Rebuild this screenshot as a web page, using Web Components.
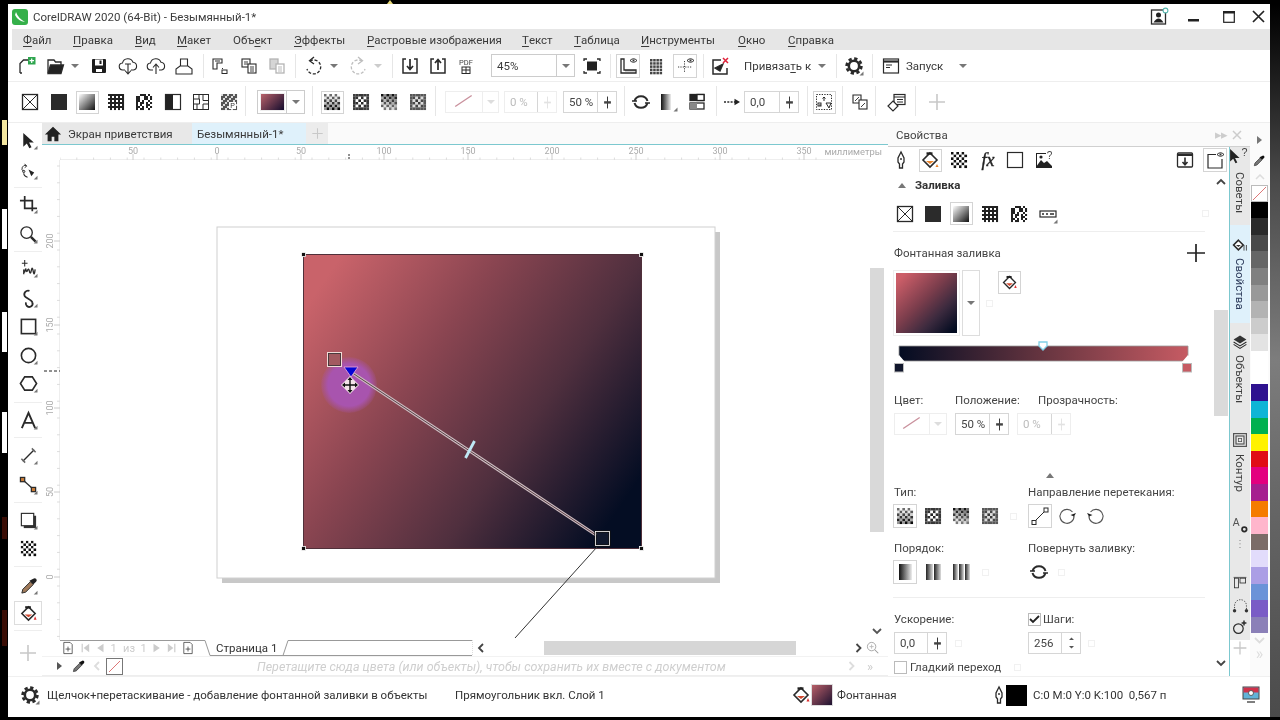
<!DOCTYPE html>
<html lang="ru"><head><meta charset="utf-8"><title>CorelDRAW</title>
<style>html,body{margin:0;padding:0;background:#000;overflow:hidden}</style></head>
<body><cd-desktop></cd-desktop>
<script>
const FONT='Roboto,"Noto Sans","Liberation Sans",sans-serif';
const tri='<path d="M19.5 15.5v4h-4z" fill="#777" stroke="none"/>';
function cells(n,f){let s='<rect x="2" y="2" width="16" height="16" fill="#fff" stroke="none"/>';const c=16/n;for(let y=0;y<n;y++)for(let x=0;x<n;x++){s+=`<rect x="${2+x*c}" y="${2+y*c}" width="${c+.05}" height="${c+.05}" fill="${f(x,y)}" stroke="none"/>`}return s}
const grey=v=>{const h=Math.round(v);return `rgb(${h},${h},${h})`};
const lg=(id,a,b,x2=1,y2=1)=>`<defs><linearGradient id="${id}" x1="0" y1="0" x2="${x2}" y2="${y2}"><stop offset="0" stop-color="${a}"/><stop offset="1" stop-color="${b}"/></linearGradient></defs>`;
const eye='<path d="M12 4.5q3.5-3.5 7 0q-3.5 3.5-7 0z" stroke-width="1"/><circle cx="15.5" cy="4.5" r="1" fill="#333" stroke="none"/>';
const ICONS={
 newdoc:'<path d="M3 17V7.5L6.5 4H11M3 17h2"/><rect x="11" y="1" width="7.5" height="7.5" fill="#2fa64f" stroke="none"/><path d="M14.7 2.5v4.5M12.5 4.7h4.5" stroke="#fff" stroke-width="1.2"/>',
 open:'<path d="M3 17V4h6l1.5 2H16v3"/><path d="M3 17.5L5.5 9H18.5L16 17.5z" fill="#222"/>',
 save:'<rect x="3" y="3" width="14" height="14" rx="1" fill="#1d1d1d" stroke="none"/><rect x="6" y="3.5" width="8" height="6" fill="#fff" stroke="none"/><rect x="10.5" y="4.5" width="2" height="3.5" fill="#1d1d1d" stroke="none"/><rect x="7" y="13" width="6" height="3" fill="#fff" stroke="none"/>',
 clouddown:'<path d="M7 14H5a3.5 3.5 0 0 1-.5-7a5.5 5.5 0 0 1 10.5-.7a3.9 3.9 0 0 1 .5 7.7H13" stroke-width="1.1"/><path d="M10 8v10M7 14.5l3 3.500 3-3.500M7 8h6" stroke-width="1.100"/>',
 cloudup:'<path d="M7 14H5a3.5 3.5 0 0 1-.5-7a5.5 5.5 0 0 1 10.5-.7a3.9 3.9 0 0 1 .5 7.7H13" stroke-width="1.100"/><path d="M10 18V8M7 11.500L10 8l3 3.500" stroke-width="1.100"/>',
 print:'<path d="M6.500 10V3h7v7" stroke-width="1.100"/><path d="M2 18v-5l4-3h8l4 3v5z" stroke-width="1.100"/>',
 layout:'<path d="M3 3h9v4H7v6H3z" stroke-width="1.100"/><path d="M5 5h5" stroke-width="1"/><rect x="12" y="14" width="5" height="3.5" stroke-width="1"/><path d="M12.5 12v1" stroke-width="1"/>',
 copy:'<rect x="3" y="3" width="8" height="8" stroke-width="1.100"/><path d="M5 6h4M5 8h4" stroke-width=".9"/><rect x="9" y="8" width="8" height="9" fill="#fff" stroke-width="1.100"/><path d="M11 11h4M11 13h4M11 15h4" stroke-width=".9"/>',
 paste:'<g opacity=".35"><rect x="3" y="3" width="8" height="10" fill="#888"/><rect x="9" y="8" width="8" height="9" fill="#fff"/><path d="M11 11h4M11 13h4M11 15h4" stroke-width=".9"/></g>',
 undo:'<path d="M6 5a7 7 0 1 1-3 8" stroke-dasharray="3 1.7"/><path d="M10 1L5.500 4.800 10 8" />',
 redo:'<g opacity=".3"><path d="M14 5a7 7 0 1 0 3 8" stroke-dasharray="3 1.7"/><path d="M10 1l4.500 3.800L10 8"/></g>',
 imp:'<path d="M6 3H3v14h14V3h-3" stroke-width="1.500"/><path d="M10 3v10M7 10l3 3.500 3-3.500" stroke-width="1.700"/>',
 exp:'<path d="M6 3H3v14h14V3h-3" stroke-width="1.500"/><path d="M10 14V4M7 7l3-3.500L13 7" stroke-width="1.700"/>',
 pdf:`<text x="10" y="9" font-size="7.500" text-anchor="middle" fill="#444" stroke="none" font-family='${FONT}'>PDF</text><rect x="6" y="11" width="8" height="6.500" stroke-width="1"/><path d="M10 11v6M6 14h8" stroke-width="1"/>`,
 fit:'<rect x="5" y="5.500" width="10" height="9" fill="#222" stroke="none"/><path d="M2 5V3h3M15 3h3v2M2 15v2h3M15 17h3v-2" stroke-width="1.300"/>',
 rulereye:'<path d="M3 3h3v11h12v3H3z" stroke-width="1.300"/><path d="M8 14v1.500M10 14v1.500M12 14v1.500M14 14v1.500M16 14v1.500" stroke-width=".8"/>'+eye,
 grideye:(()=>{let s='';for(let y=0;y<5;y++)for(let x=0;x<4;x++)s+=`<rect x="${3+x*3.2}" y="${3+y*3.2}" width="2.500" height="2.500" fill="#444" stroke="none"/>`;return s})(),
 guideeye:'<path d="M9.500 5v11M3 11h14" stroke-width=".9" stroke-dasharray="1.200 1.200"/>'+eye,
 snapoff:'<path d="M11 4H3v14h14v-6" stroke-width="1.500"/><path d="M13 8l-8 4 5 3z" fill="#222"/><path d="M13 2l5 5M18 2l-5 5" stroke="#e0223a" stroke-width="1.500"/>',
 gear:'<circle cx="10" cy="10" r="5.200" stroke-width="2.600"/><circle cx="10" cy="10" r="7.400" stroke-width="2.600" stroke-dasharray="3.300 2.500" />'+tri,
 win:'<rect x="2.500" y="3" width="15" height="14" stroke-width="1.200"/><path d="M2.500 5.500h15" stroke-width="2.200"/><path d="M5 9h6M5 11.500h4" stroke-width="1"/>',
 none:'<rect x="2.500" y="2.500" width="15" height="15"/><path d="M2.500 2.500l15 15M17.500 2.500l-15 15" stroke-width="1"/>',
 solid:'<rect x="2" y="2" width="16" height="16" fill="#2b2b2b" stroke="none"/>',
 grad:lg('g1','#fff','#111')+'<rect x="2" y="2" width="16" height="16" fill="url(#g1)" stroke="none"/>',
 vector:cells(8,(x,y)=>((y%2==0)?'#222':(x%2?'#222':'#fff'))),
 texture:cells(8,(x,y)=>[0,1,5,7,10,11,14,18,19,22,26,28,29,31,33,36,38,41,43,44,47,50,52,54,57,60,61,63].includes(y*8+x)?'#fff':'#222'),
 twocolor:'<rect x="2.500" y="2.500" width="15" height="15" stroke-width="1.200"/><rect x="2.500" y="2.500" width="7.500" height="15" fill="#222" stroke="none"/>',
 maze:'<rect x="2.500" y="2.500" width="15" height="15" stroke-width="1"/><path d="M2.500 7h6v5h-6M8 2.500V7M12 2.500v6h5.500M12 12h5.500M6 12v5.500M12 12v5.500" stroke-width="1"/>',
 hatch:cells(8,(x,y)=>(x+y)%3?'#555':'#ddd')+'<rect x="10" y="10" width="7" height="7" fill="#fff" stroke="none"/><text x="13.500" y="16.300" font-size="7" text-anchor="middle" fill="#333" stroke="none" font-family="Liberation Sans">P</text>',
 more:'<rect x="2" y="7" width="16" height="6" stroke-width="1.200"/><path d="M4 10h2M8 10h2M12 10h4" stroke-width="1.600"/>'+tri,
 chkA:cells(6,(x,y)=>(x+y)%2?grey(250-y*20):grey(110-y*20)),
 chkB:cells(6,(x,y)=>{const d=Math.hypot(x-2.5,y-2.5);return (x+y)%2&&d<2.5?'#fff':grey(30+d*10)}),
 chkC:cells(6,(x,y)=>(x+y)%2?grey(255-x*10-(5-y)*20):grey(20+y*20)),
 chkD:cells(6,(x,y)=>{const d=Math.max(Math.abs(x-2.5),Math.abs(y-2.5));return (x+y)%2&&d<2.5?'#ddd':grey(50+d*15)}),
 checker:cells(6,(x,y)=>(x+y)%2?'#fff':'#111'),
 pen:'<path d="M10 2L7 8v4l1.500 2v4h3v-4L13 12V8z"/><circle cx="10" cy="9" r="1" fill="#333" stroke="none"/>',
 fill:'<path d="M10 3l7 7-7 7-7-7z" fill="#fff" stroke-width="1.600"/><path d="M6.500 3.500h6" stroke="#222" stroke-width="2.400"/><path d="M6 11h8l-4 3z" fill="#d0482f" stroke="none"/><path d="M17 13l1.500 3.500h-3z" fill="#d33" stroke="none"/>',
 fillo:'<path d="M10 3l7 7-7 7-7-7z" fill="#fff" stroke-width="1.600"/><path d="M6.500 3.500h6" stroke="#222" stroke-width="2.400"/><path d="M6 11h8l-4 3z" fill="#e8842c" stroke="none"/><path d="M17 14l1.500 3h-3z" fill="#e8842c" stroke="none"/>',
 fx:'<text x="10" y="16" font-size="18" font-style="italic" text-anchor="middle" fill="#222" stroke="#222" stroke-width=".4" font-family="Liberation Serif">fx</text>',
 square:'<rect x="2.500" y="2.500" width="15" height="15" stroke-width="1.200"/>',
 imgq:'<path d="M2 3h10v1H3v12h15v2H2z" fill="#222" stroke="none"/><path d="M2 17l5-7 3 3 3-2 5 5v2H2z" fill="#222" stroke="none"/><circle cx="7" cy="7" r="1.600" fill="#222" stroke="none"/><text x="15.500" y="9" font-size="10" text-anchor="middle" fill="#444" stroke="none" font-family="Liberation Sans">?</text>',
 loadp:'<rect x="2.500" y="3" width="15" height="14" rx="1" stroke-width="1.300"/><path d="M2.500 5h15" stroke-width="2"/><path d="M10 7.500v7M7.500 12l2.500 2.700 2.500-2.700" stroke-width="1.600"/>',
 wineye:'<path d="M11 4.500H3V18h14v-9" stroke-width="1.200"/>'+eye,
 plus:'<path d="M10 2v16M2 10h16" stroke-width="1.600" stroke="#c8c8c8"/>',
 plusk:'<path d="M10 1v18M1 10h18" stroke-width="1.700" stroke="#222"/>',
 slash:'<path d="M2 15L17 5" stroke="#c9909c" stroke-width="1.200"/>',
 spin:'<path d="M10 3v14" stroke-width="1.100"/><rect x="6" y="8.500" width="8" height="2.800" fill="#444" stroke="none"/>',
 spinoff:'<path d="M10 3v14" stroke="#e2e2e2" stroke-width="1.100"/><path d="M6 10h8" stroke="#e2e2e2" stroke-width="2"/>',
 rot:'<path d="M3.500 9a6.800 6.800 0 0 1 13 0" stroke-width="2"/><path d="M16.500 11a6.800 6.800 0 0 1-13 0" stroke-width="2"/><path d="M1 9h5M14 11h5" stroke-width="1.600"/>',
 gramp:lg('g2','#111','#eee',1,0)+'<rect x="3" y="2" width="10" height="16" fill="url(#g2)" stroke="none"/>'+tri,
 edgeb:'<rect x="3" y="2.500" width="14" height="6" fill="#222" stroke="#222"/><rect x="3" y="11" width="14" height="6" fill="#fff"/><rect x="3" y="11" width="7" height="6" fill="#888" stroke="none"/><rect x="10" y="2.500" width="7" height="6" fill="#fff" stroke="#222"/>',
 arrowr:'<path d="M1 10h11" stroke-dasharray="2 1.300" stroke-width="1.500"/><path d="M11.500 6.800L17 10l-5.500 3.200z" fill="#222" stroke="none"/>',
 bbox:'<rect x="2.500" y="2.500" width="15" height="15" stroke-width="1" stroke-dasharray="1.300 1.300"/><path d="M10 5v4M8.500 6.500L10 5l1.500 1.500M5 13h2M12 11h5l-2 5z" stroke-width="1"/><rect x="4" y="11" width="3" height="3" stroke-width="1"/>',
 pgcopy:'<path d="M3 3h8v8H3z" stroke-width="1.100"/><path d="M5 9l4-4" stroke-width=".9"/><rect x="9" y="8" width="8" height="9" fill="#fff" stroke-width="1.100"/><path d="M11 15l4-4" stroke-width=".9"/>',
 stylecard:'<rect x="7" y="2.500" width="11" height="10" stroke-width="1.200"/><path d="M7 5h11M10 7.500h6M10 10h6" stroke-width="1"/><path d="M6 9l5 5-5 5-5-5z" fill="#fff" stroke-width="1.200"/>',
 user:'<rect x="2.500" y="3" width="14" height="14" stroke-width="1.300"/><circle cx="9.500" cy="8" r="2.500" fill="#222" stroke="none"/><path d="M4.500 15.500q5-8 10 0z" fill="#222" stroke="none"/><circle cx="16.500" cy="3.500" r="2.400" stroke="#57b6ae" stroke-width="1.100" fill="#fff"/>',
 pick:'<path d="M4.500 2l0 14.500 3.700-3.300 2.700 5 2.300-1.200-2.600-4.900h5z" fill="#222" stroke="none"/>'+tri,
 shape:'<path d="M5 11a3 3 0 0 1 3-6M6 3l2 2.500L6 7" stroke-width="1"/><circle cx="5" cy="11" r="1.200" stroke-width="1"/><path d="M5 13q0 3 4 4" stroke-width="1.100"/><path d="M10 9l6 3-3 4z" fill="#222" stroke="none"/>'+tri,
 crop:'<path d="M1 6h13v11M6 1v13h13" stroke-width="1.800"/>'+tri,
 zoom:'<circle cx="8" cy="8" r="6" stroke-width="1.400"/><path d="M12.500 12.500l5 5" stroke-width="2.600"/>'+tri,
 free:'<path d="M6 1v7M3 4.500h6" stroke-width="1.100"/><path d="M5 16V11q1 6 2-1 1 5 2 2t2 1 2-1 2 1 2-2" stroke-width="1.400"/>'+tri,
 art:'<path d="M11 2a4 4 0 0 0-5 5.500c1 2 7 3.500 8 6.500a3.500 3.500 0 0 1-6 3.500c-1-1-1-2.500-.5-3.500" stroke-width="1.900"/>'+tri,
 rect:'<rect x="2.500" y="2.500" width="15" height="15" stroke-width="1.700"/>'+tri,
 ell:'<circle cx="10" cy="10" r="7.500" stroke-width="1.700"/>'+tri,
 poly:'<path d="M6 3h8l4.500 7-4.500 7H6l-4.500-7z" stroke-width="1.700"/>'+tri,
 textA:'<path d="M3 18L10 2l7 16M5.500 12.500h9" stroke-width="2"/>'+tri,
 dim:'<path d="M4 16L16 4" stroke-width="1.400"/><path d="M13.500 2.500l4 4M2.500 13.500l4 4" stroke-width="1.600" stroke="#666"/>'+tri,
 conn:'<path d="M4 4l11 10" stroke-width="1.300"/><rect x="1.500" y="1.500" width="4.500" height="4.500" fill="#c87b38"/><rect x="13" y="12" width="4.500" height="4.500" fill="#c87b38"/>'+tri,
 shadow:'<rect x="5" y="5" width="13" height="13" fill="#333" stroke="none"/><rect x="2.500" y="2.500" width="13" height="13" fill="#fff" stroke-width="1.200"/>'+tri,
 drop:'<path d="M3 18l1-4 8-8 3 3-8 8z" fill="#a07a5a" stroke-width="1"/><path d="M11 5l4 4 3-3a2 2 0 0 0-3-3z" fill="#222" stroke="none"/>'+tri,
 dropS:'<path d="M2 18l1-4 8-8 3 3-8 8z" fill="#777" stroke-width="1"/><path d="M10 5l4 4 3-3a2 2 0 0 0-3-3z" fill="#111" stroke="none"/>',
 bstart:'<path d="M6 4v12" stroke="#ccc" stroke-width="1.700"/><path d="M16 4v12L8 10z" fill="#ccc" stroke="none"/>',
 bprev:'<path d="M15 4v12L6 10z" fill="#ccc" stroke="none"/>',
 bnext:'<path d="M5 4v12l9-6z" fill="#ccc" stroke="none"/>',
 bend:'<path d="M14 4v12" stroke="#ccc" stroke-width="1.700"/><path d="M4 4v12l8-6z" fill="#ccc" stroke="none"/>',
 addpg:'<path d="M4 2h9l3 3v13H4z" stroke-width="1"/><path d="M10 8v7M6.500 11.500h7" stroke-width="1"/>',
 zoomnav:'<circle cx="8" cy="8" r="6" stroke-width="1" stroke="#888"/><path d="M5 8h6M8 5v6" stroke="#bbb"/><path d="M12.500 12.500l5 5" stroke-width="1.500" stroke="#999"/>',
 lineDir:'<path d="M4 16L16 4" stroke-width="1"/><rect x="2" y="14.500" width="4" height="4" fill="#fff" stroke-width="1"/><rect x="14" y="2" width="4" height="4" fill="#fff" stroke-width="1"/>',
 cw:'<path d="M15.500 6a7 7 0 1 0 1.500 4" stroke-width="1.100" stroke="#555"/><path d="M13.500 9l3.500 1.500L19 7z" fill="#222" stroke="none"/>',
 ccw:'<path d="M4.500 6a7 7 0 1 1-1.500 4" stroke-width="1.100" stroke="#555"/><path d="M6.500 9L3 10.500 1 7z" fill="#222" stroke="none"/>',
 ord1:lg('g3','#111','#eee',1,0)+'<rect x="4" y="2" width="13" height="16" fill="url(#g3)" stroke="none"/>',
 ord2:lg('g4','#222','#ddd',1,0)+'<rect x="3" y="2" width="7" height="16" fill="url(#g4)" stroke="none"/><rect x="11" y="2" width="7" height="16" fill="url(#g4)" stroke="none"/>',
 ord3:lg('g5','#222','#ddd',1,0)+'<rect x="2" y="2" width="5" height="16" fill="url(#g5)" stroke="none"/><rect x="8" y="2" width="5" height="16" fill="url(#g5)" stroke="none"/><rect x="14" y="2" width="5" height="16" fill="url(#g5)" stroke="none"/>',
 home:'<path d="M10 2L1 10.500h3V18h4.500v-5h3v5H16v-7.500h3z" fill="#222" stroke="none"/>',
 layers:'<path d="M10 2l8 5-8 5-8-5z" fill="#333" stroke="none"/><path d="M2 10l8 5 8-5M2 13l8 5 8-5" stroke-width="1.300"/>',
 dockFill:'<path d="M8 4l6 6-6 6-6-6z" fill="#fff" stroke-width="2"/><path d="M5 10h6l-3 2.500z" fill="#333" stroke="none"/><path d="M15 10v7M18 10v7" stroke-width="1"/>',
 outline:'<rect x="2" y="2" width="16" height="16" stroke-width="1.500" stroke="#555"/><rect x="5" y="5" width="10" height="10" stroke-width="1.500" stroke="#555"/><rect x="8" y="8" width="4" height="4" stroke-width="1" stroke="#555"/>',
 agear:`<text x="1" y="11" font-size="12" fill="#555" stroke="none" font-family="Liberation Sans">A</text><circle cx="14.500" cy="14.500" r="2.700" stroke-width="2"/>`,
 cursorq:'<path d="M-1 1v14l3.500-3 2.500 5 2-1-2.500-5h5z" fill="#222" stroke="none"/><text x="15" y="9" font-size="12" text-anchor="middle" fill="#444" stroke="none" font-family="Liberation Sans">?</text>',
 dots:'<path d="M10 3v1M10 8v1M10 13v1" stroke-width="1.500" stroke="#666"/>',
 aligni:'<path d="M2 3h16" stroke-width="1" stroke="#444"/><rect x="3" y="4" width="5" height="12" stroke-width="1"/><rect x="10" y="4" width="7" height="6" stroke-width="1"/>',
 curvei:'<path d="M3 15V9a7 7 0 0 1 14 0v6" stroke-width="1" stroke-dasharray="1.500 1.500"/><circle cx="3" cy="15" r="2" fill="#333" stroke="none"/><circle cx="17" cy="15" r="2" fill="#333" stroke="none"/>',
 ovalp:'<circle cx="8" cy="12" r="6" stroke-width="1.500"/><path d="M15 2v6M12 5h6" stroke-width="1.800"/>',
 monitor:'<rect x="2" y="2" width="16" height="12" fill="#61b3d8" stroke="#444" stroke-width="1"/><rect x="2.500" y="2.500" width="15" height="5" fill="#d0324a" stroke="none"/><circle cx="10" cy="8" r="2.500" fill="#fff" stroke="#444" stroke-width=".8"/><path d="M6 17h8" stroke-width="1.500" stroke="#555"/>'
};
class CdIcon extends HTMLElement{constructor(){super();this.attachShadow({mode:'open'})}
 connectedCallback(){const n=this.getAttribute('name'),s=+(this.getAttribute('size')||20);
 this.shadowRoot.innerHTML=`<style>:host{display:inline-flex;width:${s}px;height:${s}px;flex:none}svg{display:block;overflow:visible}</style><svg width="${s}" height="${s}" viewBox="0 0 20 20" fill="none" stroke="#2a2a2a" stroke-width="1.300">${ICONS[n]||''}</svg>`}}
customElements.define('cd-icon',CdIcon);
const ic=(n,s=20)=>`<cd-icon name="${n}" size="${s}"></cd-icon>`;
const BASE=`:host{box-sizing:border-box}*{box-sizing:border-box}.it{display:flex;align-items:center;justify-content:center;flex:none;white-space:nowrap}
.row{display:flex;align-items:center}.box{border:1px solid #d4d4d4;background:#fff;align-self:center}
.sep{width:1px;background:#e6e6e6;align-self:stretch;margin-block:4px}.dn{width:0;height:0;border-left:4px solid transparent;border-right:4px solid transparent;border-top:4px solid #777}
.fa{width:7px;height:7px;border:1px solid #f1f1f1}.gr{color:#bbb}`;
// flow row: each item is [left, width, html, class]; the gap to the previous item is a margin
function row(items,origin){let p=origin,o='';for(const [l,w,h,c,st] of items){o+=`<span class="it ${c||''}" style="margin-left:${l-p}px;width:${w}px;${st||''}">${h}</span>`;p=l+w}return o}
const I=(cx,n,bw)=>bw?[cx-bw/2,bw,ic(n),'box',`height:${bw}px`]:[cx-10,20,ic(n)];
const S=x=>[x,1,'','sep'];
const A=cx=>[cx-4,8,'<span class="dn"></span>'];
const T=(x,w,t,st)=>[x,w,t,'',`justify-content:flex-start;${st||''}`];
class Comp extends HTMLElement{constructor(){super();this.attachShadow({mode:'open'}).innerHTML=`<style>${BASE}${this.css()}</style>${this.html()}`}css(){return''}html(){return''}}
const def=(n,c,h)=>customElements.define(n,class extends Comp{css(){return c}html(){return typeof h==='function'?h():h}});

def('cd-spin',`:host{display:flex;border:1px solid #d6d6d6;background:#fff;height:22px;align-items:stretch}.v{flex:1;padding-left:5px;line-height:20px;font-size:11.500px;color:#444}.b{width:19px;border-left:1px solid #d6d6d6;display:flex;align-items:center;justify-content:center}`,'<span class="v"><slot></slot></span><span class="b"><slot name="b"></slot></span>');

def('title-bar',`:host{display:flex;height:25px;background:#fff;align-items:center;font-size:11.500px;color:#3c3c3c}`,
 ()=>row([[4,16,`<svg width="16" height="16" viewBox="0 0 16 16"><rect width="16" height="16" rx="3" fill="#35b04a"/><path d="M4 3q2 6 9 10q-7-1-10-7z" fill="#fff"/></svg>`],
 T(25,230,'CorelDRAW 2020 (64-Bit) - Безымянный-1*'),
 [1141,20,ic('user')],
 [1180,12,'<svg width="12" height="12"><rect x="0" y="8" width="11" height="2.500" fill="#222"/></svg>'],
 [1215,12,'<svg width="12" height="12"><rect x=".7" y=".7" width="10.600" height="10.600" fill="none" stroke="#222" stroke-width="1.200"/><rect x="0" y="0" width="12" height="2.500" fill="#222"/></svg>'],
 [1244,13,'<svg width="13" height="13"><path d="M1 1l11 11M12 1L1 12" stroke="#222" stroke-width="1.700"/></svg>']],0));

const M=[[23,'<u>Ф</u>айл'],[73,'<u>П</u>равка'],[135,'<u>В</u>ид'],[177,'<u>М</u>акет'],[233,'Объ<u>е</u>кт'],[294,'<u>Э</u>ффекты'],[367,'<u>Р</u>астровые изображения'],[522,'<u>Т</u>екст'],[574,'<u>Т</u>аблица'],[641,'<u>И</u>нструменты'],[738,'<u>О</u>кно'],[788,'<u>С</u>правка']];
def('menu-bar',`:host{display:flex;height:21px;margin-left:4px;background:#e6e6e6;align-items:center;font-size:11.500px;color:#3a3a3a}u{text-underline-offset:2px}`,
 ()=>row(M.map((m,i)=>T(m[0]-12,(M[i+1]?M[i+1][0]:m[0]+60)-m[0],m[1])),0));

def('tool-one',`:host{display:flex;height:32px;align-items:center;font-size:11.500px;color:#3a3a3a;border-bottom:1px solid #eee}.sep{height:24px}.zc{height:23px;border:1px solid #ccc;justify-content:space-between;padding-left:5px}.zc b{font-weight:400;flex:1}.zc i{width:18px;height:100%;border-left:1px solid #ccc;display:flex;align-items:center;justify-content:center}`,
 ()=>row([I(27,'newdoc'),I(55,'open'),A(75),I(99,'save'),I(128,'clouddown'),I(156,'cloudup'),I(184,'print'),S(203),I(220,'layout'),I(249,'copy'),I(277,'paste'),S(295),I(314,'undo'),A(334),I(358,'redo'),[374,8,'<span class="dn" style="border-top-color:#ccc"></span>'],S(392),I(410,'imp'),I(438,'exp'),I(466,'pdf'),
 [491,84,'<b>45%</b><i><span class="dn"></span></i>','zc'],I(592,'fit'),S(610),I(628,'rulereye',24),I(657,'grideye'),I(685,'guideeye',24),S(703),I(720,'snapoff'),T(744,66,'Привяза<u style="text-underline-offset:2px">т</u>ь к'),A(822),S(836),I(854,'gear'),S(872),I(891,'win'),T(906,40,'Запуск'),A(963)],8));

const fieldBtn=(w,v,icn,off)=>`<cd-spin style="width:${w}px;${off?'color:#bbb;border-color:#eee':''}"><span style="${off?'color:#bbb':''}">${v}</span><span slot="b" style="display:flex">${ic(icn,17)}</span></cd-spin>`;
def('tool-two',`:host{display:flex;height:41px;align-items:center;font-size:11.500px;color:#444;border-bottom:1px solid #eee}.sep{height:30px}.sw{height:24px;border:1px solid #ccc;background:#fff;justify-content:flex-start}.sw b{display:block;width:24px;height:16px;margin-left:3px;background:linear-gradient(135deg,#b9626a,#1c1030 95%);box-shadow:0 0 0 1px #eee}.sw i{margin-left:2px;width:18px;height:100%;border-left:1px solid #ccc;display:flex;align-items:center;justify-content:center}
 .lc{height:22px;border:1px solid #eee;background:#fff;justify-content:flex-start}.lc i{width:18px;height:100%;border-left:1px solid #eee;display:flex;align-items:center;justify-content:center;margin-left:auto}`,
 ()=>row([I(30,'none'),I(59,'solid'),I(87,'grad',23),I(116,'vector'),I(144,'texture'),I(173,'twocolor'),I(201,'maze'),I(229,'hatch'),S(245),[257,48,'<b></b><i><span class="dn"></span></i>','sw'],S(312),I(332,'chkA',23),I(361,'chkB'),I(389,'chkC'),I(418,'chkD'),S(435),
 [445,54,`<span style="margin:0 7px">${ic('slash',22)}</span><i><span class="dn" style="border-top-color:#ddd"></span></i>`,'lc'],[504,53,fieldBtn(53,'0 %','spinoff',1)],[563,54,fieldBtn(54,'50 %','spin')],S(624),I(641,'rot'),I(668,'gramp'),I(697,'edgeb'),S(716),I(733,'arrowr'),[744,55,fieldBtn(55,'0,0','spin')],S(807),I(824,'bbox',23),S(842),I(860,'pgcopy'),S(875),I(897,'stylecard'),S(915),I(937,'plus')],8));

const tools=[[140,'pick'],[170,'shape'],[187,0],[204,'crop'],[234,'zoom'],[251,0],[268,'free'],[298,'art'],[326,'rect'],[355,'ell'],[383,'poly'],[402,0],[420,'textA'],[437,0],[455,'dim'],[485,'conn'],[502,0],[520,'shadow'],[548,'checker'],[566,0],[585,'drop'],[613,'fill'],[630,0],[653,'plus']];
def('tool-box',`:host{display:flex;flex-direction:column;width:34px;flex:none;padding-left:6px}.c{display:flex;justify-content:center;align-items:center;width:28px;height:20px;flex:none}.b{height:24px;margin-bottom:-2px;border:1px solid #ddd}.h{height:1px;width:28px;background:#eee;flex:none}`,
 ()=>{let y=123,o='';for(const [c,n] of tools){if(!n){o+=`<span class="h" style="margin-top:${c-y}px"></span>`;y=c+1}else{const b=n==='fill';o+=`<span class="c ${b?'b':''}" style="margin-top:${c-10-y-(b?2:0)}px">${ic(n,n==='plus'?20:19)}</span>`;y=c+10}}return o});

def('doc-tabs',`:host{display:flex;height:22px;background:#fafafa;border-bottom:1px solid #7cc8cf;font-size:11.500px;color:#3a3a3a}.t{display:flex;align-items:center;height:100%}.a{background:#e8e8e8;width:150px;padding-left:2px;gap:6px}.b{background:#dff1fb;width:114px;padding-left:5px}.p{background:#ececec;width:22px;justify-content:center}`,
 ()=>`<span class="t a">${ic('home',18)}<span>Экран приветствия</span></span><span class="t b">Безымянный-1*</span><span class="t p">${ic('plus',13)}</span><span style="flex:1"></span>`);

def('h-ruler',`:host{display:block;height:15px;background:#fff}svg{display:block}`,
 ()=>{let s='';
 const labels=[[133,'50'],[217,'0'],[301,'50'],[384,'100'],[468,'150'],[552,'200'],[636,'250'],[720,'300'],[804,'350']];
 for(const [x,t] of labels){s+=`<path d="M${x} 9v6" stroke="#ccc"/><text x="${x}" y="9" font-size="9" fill="#aaa" text-anchor="middle" font-family='${FONT}'>${t}</text>`}
 for(let x=60;x<828;x+=16.800){s+=`<path d="M${x.toFixed(1)} 12.500v2.500" stroke="#ddd"/>`}
 return `<svg width="828" height="15" viewBox="60 0 828 15"><path d="M60 14.500h810" stroke="#eee"/>${s}<path d="M349 9v6" stroke="#222" stroke-dasharray="2 1"/><text x="882" y="10" font-size="9.400" fill="#aaa" text-anchor="end" font-family='${FONT}'>миллиметры</text></svg>`});

def('v-ruler',`:host{display:block;width:18px;background:#fff}svg{display:block}`,
 ()=>{let s='';for(const [y,t] of [[241,'200'],[325,'150'],[408,'100'],[492,'50'],[577,'0']]){s+=`<path d="M12 ${y}h6" stroke="#ccc"/><text transform="translate(11 ${y}) rotate(-90)" font-size="9" fill="#aaa" text-anchor="middle" font-family='${FONT}'>${t}</text>`}
 for(let y=166;y<640;y+=16.800){s+=`<path d="M15 ${y.toFixed(1)}h3" stroke="#ddd"/>`}
 return `<svg width="18" height="480" viewBox="0 160 18 480"><path d="M17.500 160v480" stroke="#eee"/>${s}<path d="M2 371h16" stroke="#222" stroke-dasharray="3 2"/></svg>`});

def('draw-canvas',`:host{display:block;width:810px;height:480px;background:#fff}svg{display:block}`,
 `<svg width="810" height="480" viewBox="60 160 810 480">
 <defs><linearGradient id="f" gradientUnits="userSpaceOnUse" x1="303" y1="254" x2="636" y2="484"><stop offset=".08" stop-color="#c9636a"/><stop offset=".4" stop-color="#8a4551"/><stop offset=".7" stop-color="#4f2f3e"/><stop offset="1" stop-color="#040d23"/></linearGradient>
 <radialGradient id="gl"><stop offset=".75" stop-color="#a854ae"/><stop offset="1" stop-color="#a854ae" stop-opacity=".15"/></radialGradient></defs>
 <rect x="222" y="232" width="498" height="351" fill="#c8c8c8"/>
 <rect x="217" y="227" width="498" height="351" fill="#fff" stroke="#d0d0d0"/>
 <rect x="303.500" y="254.500" width="338" height="294" fill="url(#f)" stroke="#50303a"/>
 <g fill="#111" stroke="#fff" stroke-width=".8"><rect x="301.500" y="252.500" width="4" height="4"/><rect x="639.500" y="252.500" width="4" height="4"/><rect x="301.500" y="546.500" width="4" height="4"/><rect x="639.500" y="546.500" width="4" height="4"/></g>
 <circle cx="349" cy="385" r="28" fill="url(#gl)"/>
 <path d="M351 372L596 535" stroke="#cdbcc1" stroke-width="3"/><path d="M351 372L596 535" stroke="#5a4248" stroke-width="1"/>
 <path d="M465.500 458L474.500 441" stroke="#bfe8f5" stroke-width="2.800"/>
 <rect x="327.500" y="352.500" width="14" height="14" fill="#a35a60" stroke="#f2dcd8" stroke-width="1"/><rect x="328.500" y="353.500" width="12" height="12" fill="none" stroke="#333" stroke-width=".8"/>
 <path d="M344 367h14l-7 10z" fill="#0404d4" stroke="#ead" stroke-width=".8"/>
 <path d="M350 376l9 9-9 9-9-9z" fill="#f3e3ea"/><path d="M350 378.500v13M343.500 385h13" stroke="#111" stroke-width="1.400"/><path d="M350 377l-2.500 3h5zM350 393l-2.500-3h5zM342 385l3-2.500v5zM358 385l-3-2.500v5z" fill="#111"/>
 <path d="M597 547L515 638" stroke="#333" stroke-width="1"/>
 <rect x="595.500" y="531.500" width="14" height="14" fill="#fff" fill-opacity=".05" stroke="#111" stroke-width="2.200"/><rect x="595.500" y="531.500" width="14" height="14" fill="none" stroke="#fff" stroke-width=".8"/>
 </svg>`);

def('v-scroll',`:host{display:flex;flex-direction:column;width:18px;align-items:center;background:#fff;padding-right:4px}.t{width:14px;height:264px;background:#d9d9d9;margin-top:108px}.c{margin-top:96px;font-size:0}`,
 `<span class="t"></span><span class="c"><svg width="10" height="7"><path d="M1 1l4 4 4-4" fill="none" stroke="#555" stroke-width="1.800"/></svg></span>`);

const chev=(d,c='#444')=>`<svg width="8" height="10" viewBox="0 0 8 10"><path d="${d?'M1.500 1l4 4-4 4':'M6 1L2 5l4 4'}" fill="none" stroke="${c}" stroke-width="1.800"/></svg>`;
def('page-nav',`:host{display:flex;position:relative;height:16px;background:#fff;align-items:center;font-size:11px;color:#ccc}svg.o{position:absolute;left:0;top:0}.pg{color:#333;font-size:11.500px;justify-content:flex-start}.sb{height:14px;background:#d6d6d6}`,
 ()=>`<svg class="o" width="846" height="16" viewBox="42 640 846 16"><path d="M60 640.500h145l5 15h73l5-15h184M283 655.500h189" fill="none" stroke="#999"/><path d="M472.500 640v15" stroke="#ddd" stroke-dasharray="1 1"/></svg>`+
 row([[61,14,ic('addpg',14)],[78,14,ic('bstart',14)],[93,14,ic('bprev',14)],[110,7,'1'],[122,14,'из'],[140,7,'1'],[150,14,ic('bnext',14)],[165,14,ic('bend',14)],[181,14,ic('addpg',14)],[216,64,'Страница 1','pg'],[477,8,chev(0)],[544,252,'','sb'],[855,8,chev(1)],[866,14,ic('zoomnav',14)]],42));

def('doc-pal',`:host{display:flex;height:20px;background:#fff;align-items:center;font-size:12.500px;color:#cfcfcf;font-style:italic;border-top:1px solid #f2f2f2;border-bottom:1px solid #eee}`,
 ()=>row([[56,6,'<svg width="5" height="8"><path d="M0 0l5 4-5 4z" fill="#555"/></svg>'],[71,16,ic('dropS',14)],[93,8,chev(0,'#ddd')],[106,17,`<svg width="17" height="17"><rect x=".5" y=".5" width="16" height="16" fill="#fff" stroke="#777"/><path d="M3 14L14 3" stroke="#d77" stroke-width="1"/></svg>`],T(257,470,'Перетащите сюда цвета (или объекты), чтобы сохранить их вместе с документом'),[848,8,chev(1,'#ddd')],[864,12,'<span style="color:#ccc;font-style:normal;font-size:13px">»</span>']],42));

def('center-area',`:host{display:flex;flex-direction:column;width:846px;flex:none}.m{display:grid;grid-template-columns:18px 810px 18px;grid-template-rows:15px 480px}.hr{grid-column:2/4}.c0{background:#fff}`,
 `<doc-tabs></doc-tabs><div class="m"><span class="c0"></span><h-ruler class="hr" style="margin-left:0"></h-ruler><v-ruler></v-ruler><draw-canvas></draw-canvas><v-scroll></v-scroll></div><page-nav></page-nav><doc-pal></doc-pal>`);

const O=888;
const lab=(x,w,t)=>T(x,w,t);
const F=x=>[x,7,'','fa','height:7px'];
def('grad-edit',`:host{display:block;height:32px}svg{display:block}`,
 `<svg width="304" height="32" viewBox="892 340 304 32"><defs><linearGradient id="b" x1="0" x2="1" y1="0" y2="0"><stop offset="0" stop-color="#030c22"/><stop offset=".5" stop-color="#673540"/><stop offset="1" stop-color="#c65b63"/></linearGradient></defs>
 <path d="M899 345h289v15H899z" fill="url(#b)" stroke="#9a9a9a" stroke-width=".8"/><path d="M893 361l6-7 6 7zM1182 361l6-7 6 7z" fill="#fff"/>
 <rect x="894.500" y="362.500" width="9" height="8.500" fill="#10162c" stroke="#bbb"/><rect x="1182.500" y="362.500" width="9" height="8.500" fill="#c65b63" stroke="#bbb"/>
 <path d="M1039 341h8v4l-4 4-4-4z" fill="#fff" stroke="#7fcfe6" stroke-width="1.300"/></svg>`);
const rr=(h,mt,items)=>`<div class="r" style="height:${h}px;margin-top:${mt}px">${row(items,O)}</div>`;
def('prop-body',`:host{display:block;width:326px;font-size:11.500px;color:#444;flex:none;position:relative;z-index:1}.r{display:flex;align-items:center;width:341px}.hl{height:1px;background:#eee;margin-left:5px;width:312px}.b{font-weight:700;color:#333}
 .pv{height:60px;width:61px;background:linear-gradient(135deg,#cc5e68 8%,#7b3d4c 45%,#3b2a3e 70%,#020b20 95%);box-shadow:0 0 0 2px #fff,0 0 0 3px #eee}.dd{height:66px;border:1px solid #ddd;background:#fff}.tr{width:0;height:0;border-left:4px solid transparent;border-right:4px solid transparent;border-bottom:5px solid #777}
 .cb{width:13px;height:13px;border:1px solid #bbb;background:#fff;display:inline-flex;align-items:center;justify-content:center}.lc{height:22px;border:1px solid #eee;justify-content:flex-start}.lc i{margin-left:auto;width:18px;height:100%;border-left:1px solid #eee;display:flex;align-items:center;justify-content:center}`,
 ()=>rr(26,0,[I(901,'pen'),I(930,'fillo',23),I(959,'checker'),I(988,'fx'),I(1015,'square'),I(1044,'imgq'),I(1185,'loadp'),I(1215,'wineye',24)])
 +rr(24,0,[[898,8,'<span class="tr"></span>'],T(915,60,'Заливка','font-weight:700;color:#333')])
 +rr(33,0,[I(905,'none'),I(933,'solid'),I(961,'grad',23),I(990,'vector'),I(1019,'texture'),I(1048,'more'),F(1202)])
 +`<div class="hl" style="margin-top:1px"></div>`
 +rr(24,9,[T(894,130,'Фонтанная заливка'),I(1196,'plusk')])
 +`<div class="r" style="height:66px;margin-top:5px">${row([[896,61,'','pv'],[962,18,'<span class="dn"></span>','dd'],F(986),[998,23,ic('fill',17),'box','height:23px;align-self:flex-start;margin-top:1px']],O)}</div>`
 +`<div style="margin:5px 0 0 4px;height:32px"><grad-edit></grad-edit></div>`
 +rr(16,19,[lab(894,50,'Цвет:'),lab(955,70,'Положение:'),lab(1038,90,'Прозрачность:')])
 +rr(22,5,[[894,53,`<span style="margin:0 6px">${ic('slash',22)}</span><i><span class="dn" style="border-top-color:#ddd"></span></i>`,'lc'],[955,54,fieldBtn(54,'50 %','spin')],[1017,54,fieldBtn(54,'0 %','spinoff',1)]])
 +`<div class="r" style="height:10px;margin-top:35px">${row([[1046,8,'<span class="tr"></span>']],O)}</div>`
 +rr(16,4,[lab(894,40,'Тип:'),lab(1028,160,'Направление перетекания:')])
 +rr(24,4,[I(905,'chkA',24),I(933,'chkB'),I(961,'chkC'),I(990,'chkD'),F(1010),I(1040,'lineDir',24),I(1067,'cw'),I(1096,'ccw')])
 +rr(16,12,[lab(894,60,'Порядок:'),lab(1028,140,'Повернуть заливку:')])
 +rr(24,4,[I(905,'ord1',24),I(933,'ord2'),I(961,'ord3'),F(982),I(1039,'rot'),F(1058)])
 +`<div class="hl" style="margin-top:13px"></div>`
 +rr(16,13,[lab(894,70,'Ускорение:'),[1028,13,'<svg width="11" height="9"><path d="M1 4l3 3 6-6" fill="none" stroke="#222" stroke-width="1.800"/></svg>','cb','height:13px'],lab(1043,40,'Шаги:')])
 +rr(22,5,[[894,53,fieldBtn(53,'0,0','spin')],F(955),[1028,53,`<cd-spin style="width:53px">256<span slot="b" style="display:flex">${'<svg width="9" height="18"><path d="M2 6l2.500-2.500L7 6M2 12l2.500 2.500L7 12" fill="#555"/></svg>'}</span></cd-spin>`],F(1088)])
 +rr(16,5,[[894,13,'','cb','height:13px'],lab(910,100,'Гладкий переход'),F(1014)]));

def('prop-scroll',`:host{display:flex;flex-direction:column;align-items:center;width:15px;flex:none;padding-right:1px}.t{width:14px;height:106px;background:#dadada;margin-top:125px}.c{font-size:0}`,
 `<span class="c" style="margin-top:31px"><svg width="10" height="7"><path d="M1 6l4-4 4 4" fill="none" stroke="#444" stroke-width="1.800"/></svg></span><span class="t"></span><span class="c" style="margin-top:244px"><svg width="10" height="7"><path d="M1 1l4 4 4-4" fill="none" stroke="#444" stroke-width="1.800"/></svg></span>`);

def('dock-tabs',`:host{display:flex;flex-direction:column;align-items:center;width:21px;flex:none;background:#e8e8e8;border-left:1px solid #7cc8cf;font-size:11.500px;color:#3c3c3c}span{flex:none;display:flex}.v{display:block;writing-mode:vertical-rl;white-space:nowrap;line-height:16px}.a{background:#dff1fb;align-self:stretch;flex-direction:column;align-items:center;height:98px;margin-top:15px;padding-top:12px;color:#2c3a5a}.end{background:#fff;align-self:stretch;flex:1;justify-content:center;margin-top:5px}`,
 ()=>`<span style="margin-top:1px">${ic('cursorq',18)}</span><span class="v" style="margin-top:6px;height:38px">Советы</span>
 <span class="a">${ic('dockFill',16)}<span class="v" style="margin-top:5px">Свойства</span></span>
 <span style="margin-top:11px">${ic('layers',16)}</span><span class="v" style="margin-top:5px;height:48px">Объекты</span>
 <span style="margin-top:29px">${ic('outline',16)}</span><span class="v" style="margin-top:6px;height:37px">Контур</span>
 <span style="margin-top:26px">${ic('agear',17)}</span><span style="margin-top:4px">${ic('dots',14)}</span>
 <span style="margin-top:23px">${ic('aligni',16)}</span><span style="margin-top:7px">${ic('curvei',17)}</span><span style="margin-top:4px">${ic('ovalp',16)}</span>
 <span class="end" style="flex:1">${ic('plus',16)}</span>`);

def('prop-panel',`:host{display:flex;flex-direction:column;width:362px;flex:none}.h{display:flex;align-items:center;height:24px;background:#fafafa;font-size:11.500px;color:#444;padding-left:8px}.h b{font-weight:400;flex:1}.m{display:flex;height:529px;background:#fff}.line{height:1px}`,
 `<div class="h" style="border-bottom:1px solid #d0d0d0"><b>Свойства</b><span style="color:#ccc;font-size:13px;margin-right:5px;letter-spacing:-1px">▸▸</span><svg width="10" height="10" style="margin-right:8px"><path d="M1 1l8 8M9 1L1 9" stroke="#ccc" stroke-width="1.500"/></svg></div>
 <div class="m"><prop-body></prop-body><prop-scroll></prop-scroll><dock-tabs></dock-tabs></div>`);

const PAL=['#000','#2b2b2b','#4a4a4a','#666','#808080','#999','#b3b3b3','#ccc','#e3e3e3','#fff','#fff','#2e128f','#0fb5d6','#00b050','#fff200','#e00d16','#e3007f','#a61f8f','#f57c00','#ffb6cc','#7b6c68','#e2dcfb','#ab9ee5','#6b93d8','#7a5cc6','#8b80b8'];
def('color-pal',`:host{display:flex;flex-direction:column;width:20px;flex:none;background:#fbfbfb;align-items:center;padding-right:1px}.s{width:17px;height:16.620px;flex:none}.i{display:flex;justify-content:center;flex:none}`,
 ()=>`<span class="i" style="margin-top:13px"><svg width="5" height="8"><path d="M0 0l5 4-5 4z" fill="#777"/></svg></span>
 <span class="i" style="margin-top:10px">${ic('dropS',13)}</span>
 <span class="i" style="margin-top:7px"><svg width="10" height="6"><path d="M1 5l4-4 4 4" fill="none" stroke="#ddd" stroke-width="1.500"/></svg></span>
 <span class="s" style="margin-top:5px;background:#fff;border:1px solid #bbb"><svg width="15" height="15"><path d="M1 14L14 1" stroke="#d77" stroke-width="1"/></svg></span>`+PAL.map(c=>`<span class="s" style="background:${c}"></span>`).join('')+
 `<span class="i" style="margin-top:4px"><svg width="11" height="7"><path d="M1 1l4.500 4.500L10 1" fill="none" stroke="#ddd" stroke-width="1.800"/></svg></span><span class="i" style="color:#ddd;font:14px ${FONT};margin-top:1px">»</span>`);

def('status-bar',`:host{display:flex;height:41px;padding-bottom:4px;align-items:center;font-size:11.500px;color:#333;background:#fff;border-top:1px solid #f0f0f0}.gs{width:20px;height:20px;background:linear-gradient(135deg,#b85f68,#1d1230);box-shadow:0 0 0 1px #ddd}.ks{width:21px;height:21px;background:#000}`,
 ()=>row([I(30,'gear'),T(47,385,'Щелчок+перетаскивание - добавление фонтанной заливки в объекты'),T(455,155,'Прямоугольник вкл. Слой 1'),I(801,'fill'),[812,20,'<span class="gs"></span>'],T(837,60,'Фонтанная'),I(999,'pen'),[1006,21,'<span class="ks"></span>'],T(1033,132,'C:0 M:0 Y:0 K:100&nbsp; 0,567 п'),I(1251,'monitor')],8));

def('app-window',`:host{display:flex;flex-direction:column;width:1262px;height:713px;background:#fff;font-family:${FONT};flex:none}.b{display:flex;height:553px}`,
 `<title-bar></title-bar><menu-bar></menu-bar><tool-one></tool-one><tool-two></tool-two><div class="b"><tool-box></tool-box><center-area></center-area><prop-panel></prop-panel><color-pal></color-pal></div><status-bar></status-bar>`);

def('cd-desktop',`:host{display:block;width:1280px;height:720px;background:#000;overflow:hidden;filter:blur(.35px)}.top{height:4px;display:flex}.top i{display:block;margin-left:387px;width:0;height:0;border-left:3px solid transparent;border-right:3px solid transparent;border-bottom:4px solid #e8d97a}.m{display:flex;height:713px}.l{width:8px;flex:none}.l i{display:block;margin-left:2px;width:5px;height:100%;background:linear-gradient(#000 0 16.300%,#f3e6a0 16.300% 19.800%,#000 19.800% 28.800%,#fff 28.800% 34.400%,#000 34.400% 43.200%,#fff 43.200% 48.800%,#000 48.800% 57.200%,#fff 57.200% 63%,#000 63% 72%,#3a0d05 72% 75%,#000 75% 85%,#3a0d05 85% 90%,#000 90%)}.r{flex:1;background:linear-gradient(#000 0,#222 12%,#4a4a4a 25%,#7d7d7d 50%,#666 70%,#4b4b4b 100%)}.bot{height:3px}`,
 `<div class="top"><i></i></div><div class="m"><div class="l"><i></i></div><app-window></app-window><div class="r"></div></div><div class="bot"></div>`);
</script>
</body></html>
